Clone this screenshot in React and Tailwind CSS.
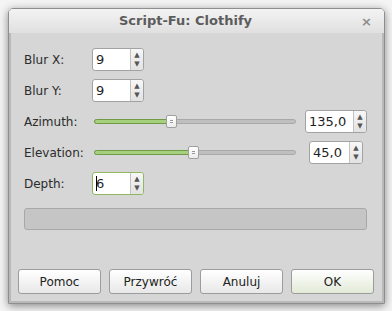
import React from "react";

function SpinBox({ value, width, focused, cursor }) {
  return (
    <div
      className={
        "flex h-[23px] rounded-[3px] border bg-white " +
        (focused ? "border-[#8fb85f]" : "border-[#a2a2a2]")
      }
      style={{ width }}
    >
      <div className="flex flex-1 items-center pl-[3px] text-[13px] text-[#1e1e1e]">
        {cursor && <span className="mr-[-1px] h-[15px] w-[1px] bg-black" />}
        {value}
      </div>
      <div className="flex w-[13px] flex-col items-center justify-center rounded-r-[3px] border-l border-[#c2c2c2] bg-gradient-to-b from-[#f7f7f7] to-[#e2e2e2] text-[7px] leading-[9px] text-[#555]">
        <span>▲</span>
        <span>▼</span>
      </div>
    </div>
  );
}

function Slider({ pos }) {
  return (
    <div className="relative h-[23px] w-[202px]">
      <div className="absolute left-0 right-0 top-[9px] h-[5px] rounded-full border border-[#a9a9a9] bg-[#bfbfbf]" />
      <div
        className="absolute left-0 top-[9px] h-[5px] rounded-l-full border border-[#6f9a48] bg-[#a6cf7e]"
        style={{ width: pos }}
      />
      <div
        className="absolute top-[5px] flex h-[13px] w-[11px] flex-col items-center justify-center gap-[1px] rounded-[2px] border border-[#a0a0a0] bg-gradient-to-b from-white to-[#ececec]"
        style={{ left: pos - 4 }}
      >
        <span className="h-[1px] w-[3px] bg-[#9a9a9a]" />
        <span className="h-[1px] w-[3px] bg-[#9a9a9a]" />
      </div>
    </div>
  );
}

function Btn({ children, ok }) {
  return (
    <button
      className={
        "h-[25px] w-[83px] rounded-[3px] border border-[#9c9c9c] bg-gradient-to-b text-[12px] text-[#222] " +
        (ok ? "from-white to-[#e2ead6]" : "from-white to-[#e8e8e8]")
      }
    >
      {children}
    </button>
  );
}

export default function App() {
  return (
    <div
      className="h-[311px] w-[392px] overflow-hidden bg-[#f4f4f4] pl-[8px] pt-[8px]"
      style={{ fontFamily: '"DejaVu Sans", sans-serif' }}
    >
      <div className="flex h-[296px] w-[377px] flex-col overflow-hidden rounded-t-[5px] border border-[#8e8e8e] shadow-[0_2px_8px_rgba(0,0,0,0.45)]">
        {/* title bar */}
        <div className="relative flex h-[24px] items-center justify-center bg-gradient-to-b from-[#f3f3f3] to-[#e0e0e0] pr-[22px]">
          <span className="text-[13px] font-bold text-[#5c5c5c]">Script-Fu: Clothify</span>
          <span className="absolute right-[12px] top-[3px] text-[13px] font-bold text-[#8c8c8c]">×</span>
        </div>

        {/* body */}
        <div className="flex flex-1 flex-col border-x-[2px] border-b-[2px] border-[#b9b9b9] bg-[#d6d6d6] pl-[13px] text-[12px] text-[#2b2b2b]">
          <div className="mt-[15px] flex h-[23px] items-center">
            <span className="w-[68px]">Blur X:</span>
            <SpinBox value="9" width={52} />
          </div>
          <div className="mt-[8px] flex h-[23px] items-center">
            <span className="w-[68px]">Blur Y:</span>
            <SpinBox value="9" width={52} />
          </div>
          <div className="mt-[8px] flex h-[23px] items-center">
            <span className="w-[70px]">Azimuth:</span>
            <Slider pos={76} />
            <div className="ml-[9px] flex w-[62px] justify-center">
              <SpinBox value="135,0" width={62} />
            </div>
          </div>
          <div className="mt-[8px] flex h-[23px] items-center">
            <span className="w-[70px]">Elevation:</span>
            <Slider pos={98} />
            <div className="ml-[9px] flex w-[62px] justify-center">
              <SpinBox value="45,0" width={54} />
            </div>
          </div>
          <div className="mt-[8px] flex h-[23px] items-center">
            <span className="w-[68px]">Depth:</span>
            <SpinBox value="6" width={52} focused cursor />
          </div>
          <div className="mt-[13px] h-[22px] w-[343px] rounded-[3px] border border-[#a8a8a8] bg-[#c5c5c5]" />

          <div className="-ml-[6px] mt-[39px] flex gap-[8px]">
            <Btn>Pomoc</Btn>
            <Btn>Przywróć</Btn>
            <Btn>Anuluj</Btn>
            <Btn ok>OK</Btn>
          </div>
        </div>
      </div>
    </div>
  );
}
